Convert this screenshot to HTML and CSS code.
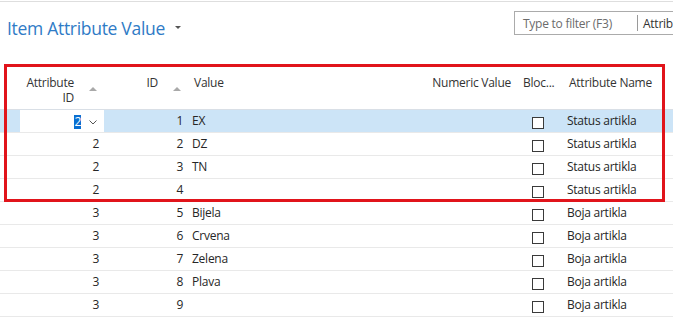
FILE: index.html
```html
<!DOCTYPE html>
<html>
<head>
  <meta charset="UTF-8">
  <title>Item Attribute Value</title>
  <link rel="stylesheet" href="styles.css">
</head>
<body>
  <div class="page">
    <div class="topbar">
      <div class="title">Item Attribute Value <span class="caret"></span></div>
      <div class="filter">
        <span class="filter-hint">Type to filter (F3)</span>
        <span class="filter-sep"></span>
        <span class="filter-field">Attribute Name</span>
      </div>
    </div>

    <div class="grid">
      <div class="row head">
        <div class="cell"></div>
        <div class="cell num sortable"><span class="label">Attribute<br>ID</span><span class="sort"></span></div>
        <div class="cell num sortable"><span class="label">ID</span><span class="sort"></span></div>
        <div class="cell text head-value">Value</div>
        <div class="cell num head-numeric">Numeric Value</div>
        <div class="cell head-blocked">Bloc...</div>
        <div class="cell text head-name">Attribute Name</div>
      </div>

      <div class="row selected">
        <div class="cell"></div>
        <div class="cell num editing"><span class="sel-text">2</span><svg class="chevron" width="8" height="5" viewBox="0 0 8 5"><polyline points="0.5,0.5 4,4 7.5,0.5" fill="none" stroke="#555" stroke-width="1"/></svg></div>
        <div class="cell num">1</div>
        <div class="cell text">EX</div>
        <div class="cell num"></div>
        <div class="cell check"><span class="box"></span></div>
        <div class="cell text">Status artikla</div>
      </div>
      <div class="row">
        <div class="cell"></div>
        <div class="cell num">2</div>
        <div class="cell num">2</div>
        <div class="cell text">DZ</div>
        <div class="cell num"></div>
        <div class="cell check"><span class="box"></span></div>
        <div class="cell text">Status artikla</div>
      </div>
      <div class="row">
        <div class="cell"></div>
        <div class="cell num">2</div>
        <div class="cell num">3</div>
        <div class="cell text">TN</div>
        <div class="cell num"></div>
        <div class="cell check"><span class="box"></span></div>
        <div class="cell text">Status artikla</div>
      </div>
      <div class="row">
        <div class="cell"></div>
        <div class="cell num">2</div>
        <div class="cell num">4</div>
        <div class="cell text"></div>
        <div class="cell num"></div>
        <div class="cell check"><span class="box"></span></div>
        <div class="cell text">Status artikla</div>
      </div>
      <div class="row">
        <div class="cell"></div>
        <div class="cell num">3</div>
        <div class="cell num">5</div>
        <div class="cell text">Bijela</div>
        <div class="cell num"></div>
        <div class="cell check"><span class="box"></span></div>
        <div class="cell text">Boja artikla</div>
      </div>
      <div class="row">
        <div class="cell"></div>
        <div class="cell num">3</div>
        <div class="cell num">6</div>
        <div class="cell text">Crvena</div>
        <div class="cell num"></div>
        <div class="cell check"><span class="box"></span></div>
        <div class="cell text">Boja artikla</div>
      </div>
      <div class="row">
        <div class="cell"></div>
        <div class="cell num">3</div>
        <div class="cell num">7</div>
        <div class="cell text">Zelena</div>
        <div class="cell num"></div>
        <div class="cell check"><span class="box"></span></div>
        <div class="cell text">Boja artikla</div>
      </div>
      <div class="row">
        <div class="cell"></div>
        <div class="cell num">3</div>
        <div class="cell num">8</div>
        <div class="cell text">Plava</div>
        <div class="cell num"></div>
        <div class="cell check"><span class="box"></span></div>
        <div class="cell text">Boja artikla</div>
      </div>
      <div class="row">
        <div class="cell"></div>
        <div class="cell num">3</div>
        <div class="cell num">9</div>
        <div class="cell text"></div>
        <div class="cell num"></div>
        <div class="cell check"><span class="box"></span></div>
        <div class="cell text">Boja artikla</div>
      </div>
    </div>

    <!-- annotation frame drawn over the first rows -->
    <div class="mark"></div>
  </div>
</body>
</html>
```

FILE: styles.css
```css
body {
  margin: 0;
  font-family: "Open Sans", "Segoe UI", sans-serif;
  font-size: 12px;
  letter-spacing: -0.25px;
  color: #262626;
  background: #fff;
  overflow: hidden;
}
.page {
  position: relative;
  width: 673px;
  height: 334px;
  overflow: hidden;
}

/* top bar */
.topbar {
  margin-top: 1px;
  border-top: 1px solid #dedede;
  height: 64px;
  display: flex;
  justify-content: space-between;
  align-items: flex-start;
}
.title {
  margin: 14px 0 0 7px;
  font-size: 17.5px;
  letter-spacing: -0.3px;
  line-height: 24px;
  color: #2f7bc6;
  display: flex;
  align-items: center;
  gap: 10px;
}
.caret {
  width: 0;
  height: 0;
  border-left: 3px solid transparent;
  border-right: 3px solid transparent;
  border-top: 3px solid #555;
  margin-top: -2px;
}
.filter {
  box-sizing: border-box;
  margin: 9px -41px 0 0;
  width: 200px;
  height: 24px;
  border: 1px solid #ababab;
  display: flex;
  align-items: center;
  padding-left: 8px;
  white-space: nowrap;
  overflow: hidden;
}
.filter-hint {
  width: 114px;
  flex: none;
  color: #6b6b6b;
}
.filter-sep {
  width: 0;
  height: 16px;
  border-left: 1px solid #9a9a9a;
  flex: none;
}
.filter-field {
  padding-left: 5px;
  color: #333;
}

/* grid */
.row {
  display: grid;
  grid-template-columns: 20px 84px 84px 232px 95px 46px 112px;
  height: 22px;
  border-bottom: 1px solid #e9e9e9;
  line-height: 22px;
  white-space: nowrap;
}
.row.head {
  height: 43px;
  line-height: 15px;
  color: #333;
  border-bottom-color: #d9dfe6;
}
.head .cell {
  padding-top: 9px;
}
.cell {
  overflow: hidden;
}
.num {
  text-align: right;
  padding-right: 5px;
}
.text {
  padding-left: 4px;
}
.sortable {
  display: flex;
  justify-content: flex-end;
  align-items: flex-start;
  padding-right: 7px;
}
.sortable .label {
  text-align: right;
}
.sort {
  width: 0;
  height: 0;
  border-left: 4px solid transparent;
  border-right: 4px solid transparent;
  border-bottom: 4px solid #a9a9a9;
  margin: 12px 0 0 15px;
}
.head-value {
  padding-left: 6px;
}
.head-numeric {
  padding-right: 4px;
}
.head-blocked {
  padding-left: 8px;
}
.row .text:last-child {
  padding-left: 6px;
}
.row.head .text:last-child {
  padding-left: 8px;
}

/* selected row */
.row.selected {
  background: #cce4f7;
}
.editing {
  background: #fff;
  display: flex;
  justify-content: flex-end;
  align-items: center;
  padding-right: 7px;
}
.sel-text {
  background: #0a6fd1;
  color: #fff;
  line-height: 14px;
  margin-top: 2px;
}
.chevron {
  margin: 2px 0 0 8px;
}

/* checkbox */
.check {
  display: flex;
  justify-content: center;
  align-items: flex-start;
  padding-top: 7px;
}
.box {
  width: 12px;
  height: 12px;
  box-sizing: border-box;
  border: 1px solid #3a3a3a;
  background: #fff;
}

/* red annotation frame */
.mark {
  position: absolute;
  left: 4px;
  top: 64px;
  width: 661px;
  height: 138px;
  box-sizing: border-box;
  border: 3px solid #e1141b;
}
```
